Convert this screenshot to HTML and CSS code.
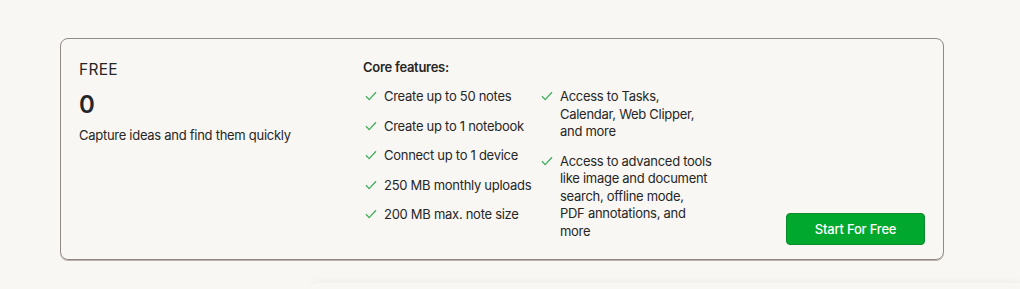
FILE: index.html
```html
<!DOCTYPE html>
<html lang="en">
<head>
  <meta charset="UTF-8">
  <meta name="viewport" content="width=device-width, initial-scale=1.0">
  <title>Plans</title>
  <link rel="stylesheet" href="styles.css">
</head>
<body>
  <div class="plan">
    <div class="plan-info">
      <h2>FREE</h2>
      <div class="price">0</div>
      <p>Capture ideas and find them quickly</p>
    </div>
    <div class="features">
      <h3>Core features:</h3>
      <div class="feature-cols">
        <ul>
          <li><svg viewBox="0 0 12 10"><path d="M1 5.2 4.2 8.6 11 1.2"/></svg>Create up to 50 notes</li>
          <li><svg viewBox="0 0 12 10"><path d="M1 5.2 4.2 8.6 11 1.2"/></svg>Create up to 1 notebook</li>
          <li><svg viewBox="0 0 12 10"><path d="M1 5.2 4.2 8.6 11 1.2"/></svg>Connect up to 1 device</li>
          <li><svg viewBox="0 0 12 10"><path d="M1 5.2 4.2 8.6 11 1.2"/></svg>250 MB monthly uploads</li>
          <li><svg viewBox="0 0 12 10"><path d="M1 5.2 4.2 8.6 11 1.2"/></svg>200 MB max. note size</li>
        </ul>
        <ul class="wide">
          <li><svg viewBox="0 0 12 10"><path d="M1 5.2 4.2 8.6 11 1.2"/></svg>Access to Tasks, Calendar, Web Clipper, and more</li>
          <li><svg viewBox="0 0 12 10"><path d="M1 5.2 4.2 8.6 11 1.2"/></svg>Access to advanced tools like image and document search, offline mode, PDF&nbsp;annotations, and more</li>
        </ul>
      </div>
    </div>
    <div class="actions">
      <button>Start For Free</button>
    </div>
  </div>
  <div class="next-card"></div>
</body>
</html>
```

FILE: styles.css
```css
body {
  margin: 0;
  padding: 38px 76px 0 60px;
  background: #f9f7f4;
  font-family: Inter, "Noto Sans", sans-serif;
  color: #262626;
  overflow: hidden;
  height: 289px;
  box-sizing: border-box;
}
.plan {
  display: flex;
  border: 1px solid #8f8a86;
  border-radius: 8px;
  box-shadow: 0 1px 0 #b8b1ab;
  padding: 20px 18px 14px 18px;
  height: 222px;
  box-sizing: border-box;
}
.plan-info {
  width: 284px;
}
.plan-info h2 {
  margin: 1px 0 0;
  font-size: 15.5px;
  font-weight: 400;
  line-height: 19px;
  letter-spacing: 0.3px;
}
.price {
  margin-top: 12px;
  font-size: 24px;
  font-weight: 600;
  line-height: 28px;
}
.plan-info p {
  margin: 8px 0 0;
  font-size: 13px;
  line-height: 17px;
  letter-spacing: -0.28px;
}
.features h3 {
  margin: 0;
  font-size: 13px;
  font-weight: 600;
  line-height: 16px;
  letter-spacing: -0.28px;
}
.feature-cols {
  display: flex;
  margin-top: 13px;
}
ul {
  list-style: none;
  margin: 0;
  padding: 0;
  width: 176px;
  display: flex;
  flex-direction: column;
  gap: 12px;
}
ul.wide {
  width: 173px;
}
li {
  display: flex;
  font-size: 13px;
  line-height: 17.5px;
  letter-spacing: -0.28px;
}
li svg {
  flex: none;
  width: 12px;
  height: 10px;
  margin: 3px 7px 0 2px;
  fill: none;
  stroke: #3fae5a;
  stroke-width: 1.3;
}
.actions {
  flex: 1;
  display: flex;
  justify-content: flex-end;
  align-items: flex-end;
}
button {
  width: 139px;
  height: 32px;
  border: 1px solid #0a8a2a;
  border-radius: 4px;
  background: #00a82d;
  color: #fff;
  font-family: Inter, "Noto Sans", sans-serif;
  font-size: 13px;
  font-weight: 500;
  letter-spacing: -0.2px;
  cursor: pointer;
}
.next-card {
  margin: 23px -76px 0 250px;
  height: 6px;
  border-radius: 12px 0 0 0;
  box-shadow: 0 -2px 6px rgba(0, 0, 0, 0.04);
}
```
